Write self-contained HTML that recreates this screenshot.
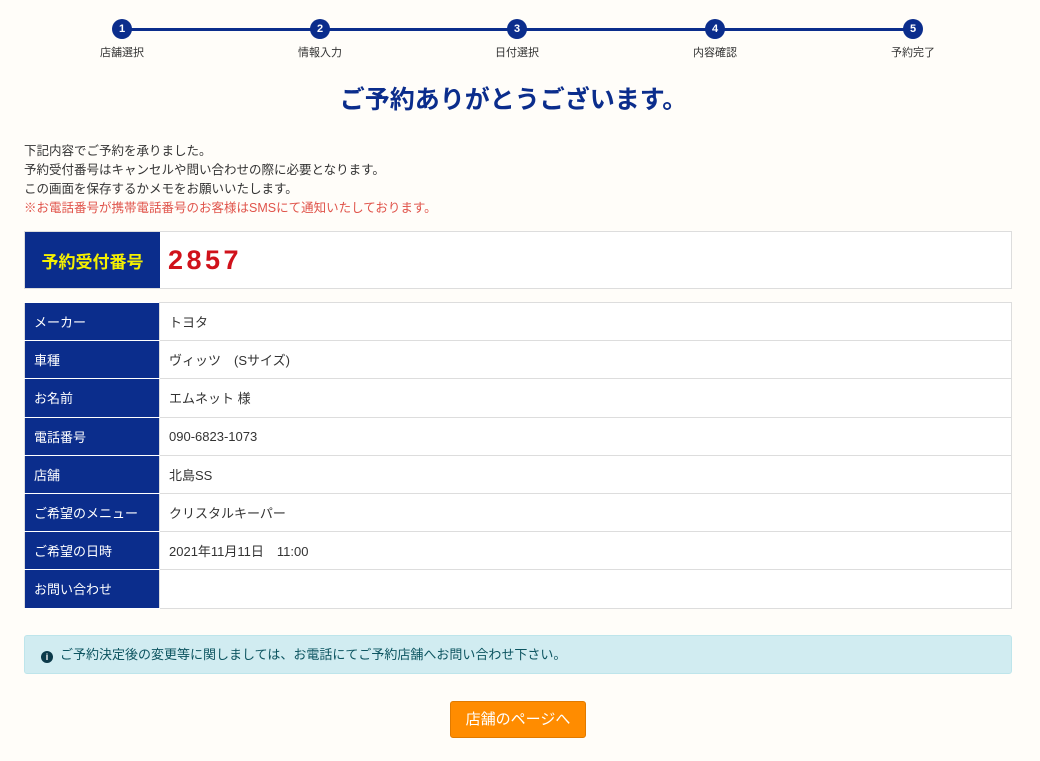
<!DOCTYPE html>
<html><head><meta charset="utf-8"><style>
*{margin:0;padding:0;box-sizing:border-box}
body{width:1040px;height:761px;background:#fffdf9;font-family:"Liberation Sans","Noto Sans CJK JP",sans-serif;color:#333;position:relative;overflow:hidden}
.line{position:absolute;left:122px;width:791px;top:28px;height:3px;background:#0b2d8c}
.st{position:absolute;top:19px;width:20px;height:20px;margin-left:-10px;border-radius:50%;background:#0b2d8c;color:#fff;font-size:11px;font-weight:bold;text-align:center;line-height:20px}
.lb{position:absolute;top:44px;width:80px;margin-left:-40px;text-align:center;font-size:11px;color:#333}
h1{position:absolute;top:84px;left:0;width:1027px;text-align:center;font-size:25px;color:#0b2d8c;font-weight:bold;line-height:32px}
.msg{position:absolute;left:24px;top:142px;font-size:12.5px;line-height:19px;color:#333}
.msg .r{color:#e0534a}
.box{position:absolute;left:24px;width:988px;border:1px solid #ddd;background:#fff}
.rc{top:231px;height:58px;display:flex}
.rc .h{width:135px;background:#0b2d8c;color:#f5f000;font-weight:bold;font-size:17px;display:flex;align-items:center;justify-content:center}
.rc .v{padding-left:8px;color:#d0121b;font-size:27px;font-weight:bold;display:flex;align-items:center;letter-spacing:3.5px}
table{position:absolute;left:24px;top:302px;width:988px;border-collapse:collapse;background:#fff}
td{height:38.2px;border:1px solid #ddd;font-size:13px;padding-left:9px}
td.h{width:135px;background:#0b2d8c;color:#fff;border-color:#fff #ddd}
.info{position:absolute;left:24px;top:635px;width:988px;height:39px;background:#d1ecf1;border:1px solid #bee5eb;border-radius:3px;font-size:13px;color:#0c5460;line-height:37px;padding-left:16px}
.info i{display:inline-block;width:12px;height:12px;border-radius:50%;background:#0c3a4a;color:#fff;font-size:9px;font-style:normal;font-weight:bold;text-align:center;line-height:12px;vertical-align:-1px;margin-right:7px}
.btn{position:absolute;left:450px;top:701px;width:136px;height:37px;background:#ff8c00;border:1px solid #e07a00;border-radius:3px;color:#fff;font-size:15px;text-align:center;line-height:35px}
</style></head><body>
<div class="line"></div>
<div class="st" style="left:122px">1</div><div class="lb" style="left:122px">店舗選択</div>
<div class="st" style="left:320px">2</div><div class="lb" style="left:320px">情報入力</div>
<div class="st" style="left:517px">3</div><div class="lb" style="left:517px">日付選択</div>
<div class="st" style="left:715px">4</div><div class="lb" style="left:715px">内容確認</div>
<div class="st" style="left:913px">5</div><div class="lb" style="left:913px">予約完了</div>
<h1>ご予約ありがとうございます。</h1>
<div class="msg">下記内容でご予約を承りました。<br>予約受付番号はキャンセルや問い合わせの際に必要となります。<br>この画面を保存するかメモをお願いいたします。<br><span class="r">※お電話番号が携帯電話番号のお客様はSMSにて通知いたしております。</span></div>
<div class="box rc"><div class="h">予約受付番号</div><div class="v">2857</div></div>
<table>
<tr><td class="h">メーカー</td><td>トヨタ</td></tr>
<tr><td class="h">車種</td><td>ヴィッツ　(Sサイズ)</td></tr>
<tr><td class="h">お名前</td><td>エムネット 様</td></tr>
<tr><td class="h">電話番号</td><td>090-6823-1073</td></tr>
<tr><td class="h">店舗</td><td>北島SS</td></tr>
<tr><td class="h">ご希望のメニュー</td><td>クリスタルキーパー</td></tr>
<tr><td class="h">ご希望の日時</td><td>2021年11月11日　11:00</td></tr>
<tr><td class="h">お問い合わせ</td><td></td></tr>
</table>
<div class="info"><i>i</i>ご予約決定後の変更等に関しましては、お電話にてご予約店舗へお問い合わせ下さい。</div>
<div class="btn">店舗のページへ</div>
</body></html>
